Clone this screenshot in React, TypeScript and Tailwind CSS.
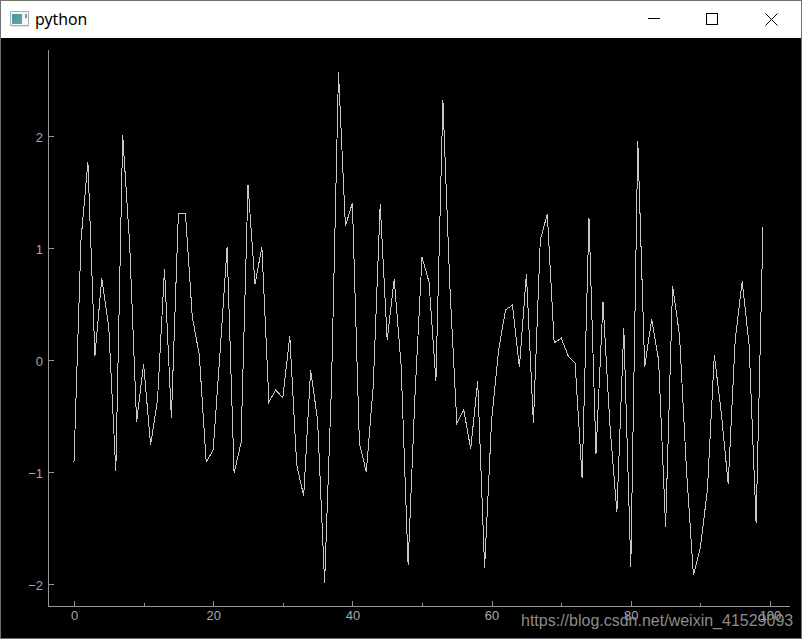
import React from 'react';

// sampled curve: one y pixel per index, x = 74 + i * 6.96
const curve = [
  462, 240, 162, 356, 278, 328, 471, 135, 245, 422,
  364, 445, 400, 269, 418, 213, 213, 317, 355, 462,
  450, 350, 247, 473, 443, 185, 284, 247, 402, 390,
  398, 336, 465, 496, 370, 420, 583, 385, 72, 226,
  203, 443, 472, 385, 204, 340, 279, 365, 565, 395,
  257, 282, 381, 100, 285, 423, 410, 449, 381, 568,
  420, 350, 310, 305, 367, 274, 423, 240, 214, 343,
  338, 356, 363, 478, 218, 454, 302, 425, 512, 328,
  567, 141, 367, 319, 360, 527, 286, 335, 470, 575,
  547, 490, 355, 413, 484, 340, 281, 345, 523, 227,
];

const points = curve.map((y, i) => `${(74 + i * 6.96).toFixed(1)},${y}`).join(' ');

const yTicks = [
  { label: '2', y: 136 },
  { label: '1', y: 248 },
  { label: '0', y: 360 },
  { label: '\u22121', y: 472 },
  { label: '\u22122', y: 584 },
];

const xTicks = [0, 20, 40, 60, 80, 100];
const xMinor = [10, 30, 50, 70, 90];
const xPos = (v: number) => 74 + v * 6.96;

const WindowIcon = () => (
  <svg width="20" height="17" viewBox="0 0 20 17" className="shrink-0">
    <defs>
      <linearGradient id="pane" x1="0" y1="0" x2="1" y2="1">
        <stop offset="0" stopColor="#4f8fb0" />
        <stop offset="1" stopColor="#5fae8c" />
      </linearGradient>
    </defs>
    <rect x="0.5" y="0.5" width="18" height="14" fill="#f4f6f8" stroke="#a9b0b6" />
    <rect x="2" y="3" width="10" height="10" fill="url(#pane)" />
    <rect x="15" y="3" width="2" height="4" fill="#5fa8a0" />
    <rect x="1" y="15" width="18" height="1" fill="#e2e2e2" />
  </svg>
);

const Plot = () => (
  <svg viewBox="1 38 800 600" className="block w-full h-full" shapeRendering="crispEdges">
    <polyline points={points} fill="none" stroke="#c8c8c8" strokeWidth="1" />
    <path d="M48.5 50V606H790" fill="none" stroke="#969696" />
    {yTicks.map((t) => (
      <g key={t.label}>
        <path d={`M48 ${t.y + 0.5}H54`} stroke="#969696" />
        <text x="43" y={t.y + 6} textAnchor="end" fill="#a8a8a8" fontSize="13" fontFamily="'Liberation Sans', sans-serif">
          {t.label}
        </text>
      </g>
    ))}
    {xTicks.map((v) => (
      <g key={v}>
        <path d={`M${Math.round(xPos(v)) + 0.5} 601V606`} stroke="#969696" />
        <text x={xPos(v) + 0.5} y="620" textAnchor="middle" fill="#a8a8a8" fontSize="13" fontFamily="'Liberation Sans', sans-serif">
          {v}
        </text>
      </g>
    ))}
    {xMinor.map((v) => (
      <path key={v} d={`M${Math.round(xPos(v)) + 0.5} 603V606`} stroke="#969696" />
    ))}
  </svg>
);

export default function App() {
  return (
    <div className="relative w-[802px] h-[639px] flex flex-col bg-black border border-[#707070] overflow-hidden">
      <div className="h-[37px] shrink-0 bg-white flex items-center pl-[9px]">
        <WindowIcon />
        <span className="ml-[5px] text-[15.8px] text-black font-['Noto_Sans',sans-serif]">python</span>
        <div className="ml-auto flex items-center">
          <div className="w-[58px] flex justify-center">
            <svg width="13" height="13" viewBox="0 0 13 13" shapeRendering="crispEdges">
              <path d="M0 5.5H12" stroke="#000" />
            </svg>
          </div>
          <div className="w-[58px] flex justify-center">
            <svg width="13" height="13" viewBox="0 0 13 13" shapeRendering="crispEdges">
              <rect x="0.5" y="0.5" width="11" height="11" fill="none" stroke="#000" />
            </svg>
          </div>
          <div className="w-[60px] flex justify-center">
            <svg width="13" height="13" viewBox="0 0 13 13">
              <path d="M0.5 0.5L12.5 12.5M12.5 0.5L0.5 12.5" stroke="#000" strokeWidth="1" />
            </svg>
          </div>
        </div>
      </div>
      <div className="flex-1 min-h-0">
        <Plot />
      </div>
      <span className="absolute left-[520px] top-[608px] text-[16px] text-[#8c8c8c] font-['Liberation_Sans',sans-serif] whitespace-nowrap">
        https://blog.csdn.net/weixin_41529093
      </span>
    </div>
  );
}
